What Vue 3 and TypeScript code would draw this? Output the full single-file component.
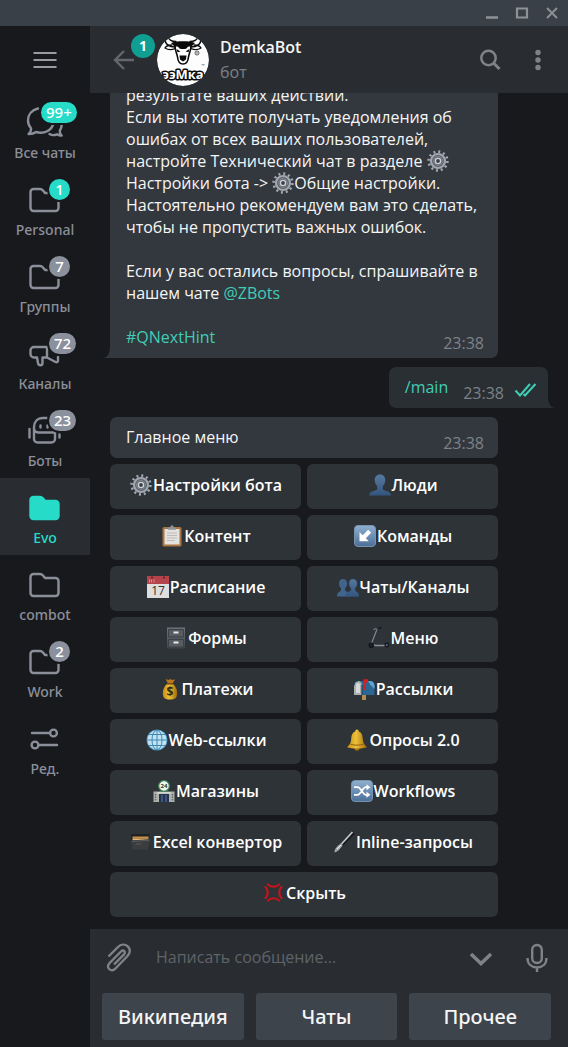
<script setup lang="ts">
import { ref } from 'vue'

interface Folder {
  label: string
  icon: string
  badge?: string
  accent?: boolean
}

interface Mark {
  text: string
  y: number
  size: number
  color: string
  bold?: boolean
}

interface BotButton {
  icon: string
  label: string
  mark?: Mark
}

const folders: Folder[] = [
  { label: 'Все чаты', icon: 'chats', badge: '99+', accent: true },
  { label: 'Personal', icon: 'folder', badge: '1', accent: true },
  { label: 'Группы', icon: 'folder', badge: '7' },
  { label: 'Каналы', icon: 'megaphone', badge: '72' },
  { label: 'Боты', icon: 'bot', badge: '23' },
  { label: 'Evo', icon: 'folder-full' },
  { label: 'combot', icon: 'folder' },
  { label: 'Work', icon: 'folder', badge: '2' },
  { label: 'Ред.', icon: 'sliders' },
]

const active = ref('Evo')
const draft = ref('')

const botButtons: BotButton[] = [
  { icon: 'gear', label: 'Настройки бота' },
  { icon: 'person', label: 'Люди' },
  { icon: 'clipboard', label: 'Контент' },
  { icon: 'arrow', label: 'Команды' },
  { icon: 'calendar', label: 'Расписание', mark: { text: '17', y: 19, size: 12, color: '#2f2f2f' } },
  { icon: 'people', label: 'Чаты/Каналы' },
  { icon: 'cabinet', label: 'Формы' },
  { icon: 'scooter', label: 'Меню' },
  { icon: 'money', label: 'Платежи', mark: { text: '$', y: 18, size: 12, color: '#3b2a08', bold: true } },
  { icon: 'mailbox', label: 'Рассылки' },
  { icon: 'globe', label: 'Web-ссылки' },
  { icon: 'bell', label: 'Опросы 2.0' },
  { icon: 'store', label: 'Магазины', mark: { text: '24', y: 8, size: 6, color: '#243a2c', bold: true } },
  { icon: 'shuffle', label: 'Workflows' },
  { icon: 'box', label: 'Excel конвертор' },
  { icon: 'brush', label: 'Inline-запросы' },
  { icon: 'anger', label: 'Скрыть' },
]

const replies: string[] = ['Википедия', 'Чаты', 'Прочее']
</script>

<template>
  <div class="window">
    <svg class="defs" aria-hidden="true">
      <defs>
        <linearGradient id="g-blue" x1="0" y1="0" x2="0" y2="1">
          <stop offset="0" stop-color="#8fb0d0" /><stop offset="1" stop-color="#4b6f98" />
        </linearGradient>
        <linearGradient id="g-person" x1="0" y1="0" x2="0" y2="1">
          <stop offset="0" stop-color="#56799f" /><stop offset="1" stop-color="#34557e" />
        </linearGradient>
        <linearGradient id="g-gold" x1="0" y1="0" x2="1" y2="0">
          <stop offset="0" stop-color="#c98a10" /><stop offset="0.45" stop-color="#ebc23c" /><stop offset="1" stop-color="#a06807" />
        </linearGradient>
        <linearGradient id="g-steel" x1="0" y1="0" x2="0" y2="1">
          <stop offset="0" stop-color="#6d7377" /><stop offset="1" stop-color="#3f4549" />
        </linearGradient>
      </defs>

      <symbol id="gear" viewBox="0 0 22 22">
        <circle cx="11" cy="11" r="9.4" fill="none" stroke="#a0a7af" stroke-width="2.6" stroke-dasharray="2 2.92" />
        <circle cx="11" cy="11" r="7" fill="#555c65" stroke="#a0a7af" stroke-width="2.2" />
        <circle cx="11" cy="11" r="4.4" fill="none" stroke="#7d858e" stroke-width="1.2" />
        <circle cx="11" cy="11" r="2.6" fill="#3c4249" stroke="#ccd1d6" stroke-width="1.4" />
      </symbol>
      <symbol id="person" viewBox="0 0 22 22">
        <path d="M11 .5c3.400 0 5.300 2.400 5.300 5.600 0 2.600-1 4.800-2.500 6v2.600c0 1.400 2.200 1.900 4.400 2.600 2.200.7 3.600 1.800 3.800 4.200H0c.2-2.400 1.600-3.500 3.800-4.200 2.200-.7 4.400-1.200 4.400-2.600v-2.600c-1.500-1.200-2.500-3.400-2.500-6C5.700 2.900 7.600.5 11 .5z" fill="url(#g-person)" />
      </symbol>
      <symbol id="clipboard" viewBox="0 0 22 22">
        <rect x="1.5" y="2" width="19" height="19.5" rx="1.5" fill="#a87440" />
        <path d="M3.500 4h15v15.500h-15z" fill="#e4e2df" />
        <path d="M7 4.800V2.500h2.300C9.500 1 10 .3 11 .3s1.500.7 1.700 2.200H15v2.300z" fill="#8d9399" />
        <path d="M6 8h10M6 10.500h10M6 13h10M6 15.500h8" stroke="#bcbcbc" stroke-width="1" />
      </symbol>
      <symbol id="arrow" viewBox="0 0 22 22">
        <rect x="0.5" y="0.5" width="21" height="21" rx="3.5" fill="url(#g-blue)" stroke="#7893b0" />
        <path d="M14.200 4.800l3 3-5.400 5.400 3 3H5.500V7l3.200 3.200z" fill="#fff" />
      </symbol>
      <symbol id="calendar" viewBox="0 0 22 22">
        <rect width="22" height="22" fill="#dedede" />
        <rect width="22" height="8" fill="#b5434b" />
        <circle cx="5" cy="1.5" r="1" fill="#5d1d24" /><circle cx="17" cy="1.5" r="1" fill="#5d1d24" />
        <path d="M2.500 3.500v3M4.500 3.500v3M7 3.500v3" stroke="#d98c90" stroke-width="1" />
      </symbol>
      <symbol id="people" viewBox="0 0 22 22">
        <path d="M6 3c2.700 0 4.100 2 4.100 4.600 0 2-.8 3.700-2 4.600v2c0 1.500 4.900.8 4.900 6.300H0c0-5.500 4-4.800 4-6.300v-2c-1.200-.9-2-2.600-2-4.600C2 5 3.300 3 6 3z" fill="#41648d" />
        <path d="M16 3c2.700 0 4.100 2 4.100 4.600 0 2-.8 3.700-2 4.600v2c0 1.500 3.900.8 3.900 6.300H9c0-5.500 5-4.800 5-6.300v-2c-1.200-.9-2-2.600-2-4.600C12 5 13.300 3 16 3z" fill="url(#g-person)" stroke="#2f4f75" stroke-width=".5" />
      </symbol>
      <symbol id="cabinet" viewBox="0 0 22 22">
        <rect x="2" y="0.5" width="18" height="21" fill="url(#g-steel)" />
        <path d="M3.500 2.500h15v7.500h-15zM3.500 12.500h15V20h-15z" fill="#565c61" stroke="#3b4145" />
        <path d="M8.500 4.500h5v2h-5zM8.500 14.500h5v2h-5z" fill="#e6e9ea" />
      </symbol>
      <symbol id="scooter" viewBox="0 0 22 22">
        <path d="M5.500 2.500l3-1M9 2.300L3.500 16.500" fill="none" stroke="#7e8791" stroke-width="1.2" />
        <path d="M10.500 1.500l3-1.200" stroke="#15181d" stroke-width="1.5" />
        <path d="M2.500 16l5 2.500H18" fill="none" stroke="#8a8f97" stroke-width="1.3" />
        <circle cx="3.2" cy="18.2" r="2" fill="#20262e" stroke="#10141b" stroke-width="1.5" />
        <circle cx="18.8" cy="18" r="1.8" fill="#59616c" stroke="#10141b" stroke-width="1.3" />
      </symbol>
      <symbol id="money" viewBox="0 0 22 22">
        <path d="M6.500 1L9.500 2l2-1 1.500 1 3-.5-2.500 4H9z" fill="#b9761c" />
        <path d="M8.500 5.500h5c3 2.500 5 6 4.700 10.500-.3 3.800-2 5.500-7.200 5.500s-6.900-1.700-7.200-5.500C3.500 11.500 5.500 8 8.500 5.500z" fill="url(#g-gold)" />
        <path d="M8 5.800h6" stroke="#7a4a0a" stroke-width="1.5" />
      </symbol>
      <symbol id="mailbox" viewBox="0 0 22 22">
        <path d="M9 17h4v5H9z" fill="#b38b55" />
        <path d="M5 3h12c3 0 4.500 2 4.500 5v9H9z" fill="#2b6793" />
        <path d="M15 3h2c3 0 4.500 2 4.500 5v3l-4-4z" fill="#58a6cf" />
        <path d="M1 7.500C1 4.500 2.700 3 5 3s4 1.500 4 4.500V17H1z" fill="#a8afb2" />
        <path d="M3 8c0-2 .8-3 2-3s2 1 2 3v7H3z" fill="#d8d9d5" />
        <path d="M1 7.500C1 4.500 2.700 3 5 3M9 7v10" fill="none" stroke="#1d3e58" stroke-width="1.2" />
        <path d="M10.500 12V1.200H15V5h-2.200v7z" fill="#d51e25" />
      </symbol>
      <symbol id="globe" viewBox="0 0 22 22">
        <circle cx="11" cy="11" r="10.5" fill="#4f9cc6" />
        <circle cx="11" cy="11" r="9.7" fill="#c0e2f1" />
        <path d="M11 1v20M1 11h20M3 5.500h16M3 16.500h16" fill="none" stroke="#3d88b5" stroke-width="1" />
        <ellipse cx="11" cy="11" rx="5" ry="9.8" fill="none" stroke="#3d88b5" stroke-width="1" />
      </symbol>
      <symbol id="bell" viewBox="0 0 22 22">
        <ellipse cx="11" cy="20" rx="2.5" ry="1.7" fill="#a66c08" />
        <path d="M11 .5c1.200 0 1.800.8 1.800 2 3 1 3.700 4 4 7.500.3 3.800 1.200 5.500 4.200 8.300-4 1.600-16 1.600-20 0 3-2.800 3.900-4.500 4.200-8.300.3-3.500 1-6.500 4-7.500 0-1.200.6-2 1.800-2z" fill="url(#g-gold)" />
        <path d="M4.500 15.200c4 1.300 9 1.300 13 0" fill="none" stroke="#946008" stroke-width="1" />
      </symbol>
      <symbol id="store" viewBox="0 0 22 22">
        <path d="M.5 11.500h21V22H.5z" fill="#aeb2ab" />
        <path d="M6 13.500h10V22H6z" fill="#26344f" />
        <path d="M4.500 13h13" stroke="#e3e5dd" stroke-width="1.5" />
        <path d="M2.500 14v7M19.500 14v7" stroke="#666d6b" stroke-width="1.5" stroke-dasharray="1.5 1" />
        <path d="M9 15v7M13 15v7" stroke="#5576a5" stroke-width="1" />
        <circle cx="11" cy="6" r="5.3" fill="#f3f6ef" stroke="#3e8a58" stroke-width="1.2" />
      </symbol>
      <symbol id="shuffle" viewBox="0 0 22 22">
        <rect x="0.5" y="0.5" width="21" height="21" rx="3.5" fill="url(#g-blue)" stroke="#7893b0" />
        <path d="M3 7.200h3.500c3.500 0 5 7.600 8.500 7.600h2M3 14.800h3.500c3.500 0 5-7.600 8.500-7.600h2" fill="none" stroke="#fff" stroke-width="1.7" />
        <path d="M15.500 4.200l4 3-4 3zM15.500 11.800l4 3-4 3z" fill="#fff" />
      </symbol>
      <symbol id="box" viewBox="0 0 22 22">
        <path d="M1 3h18.500v15H2z" fill="#1f2224" />
        <path d="M2.500 5.500h16v2h-16z" fill="#c98f48" />
        <path d="M2.500 7.500h16v2h-16z" fill="#e8b872" />
        <path d="M1 9.500l19.500-1.500L18.500 18.500H2z" fill="#3b3d3e" />
        <path d="M1.500 10.500l18-1.300" stroke="#5a5c5d" />
        <path d="M6 13h5" stroke="#595c5e" />
      </symbol>
      <symbol id="brush" viewBox="0 0 22 22">
        <path d="M20.500 1.500L8 14.500" stroke="#16191d" stroke-width="3.5" />
        <path d="M19.500 1L7.500 14" stroke="#c4c8cb" stroke-width="1.8" />
        <path d="M8 12.500l1.800 1.700C7 18 5 20.500 1.500 21.500 1.300 18 4 15 8 12.500z" fill="#a5a9ab" />
        <path d="M4 18l4-4" stroke="#f0f0f0" />
      </symbol>
      <symbol id="anger" viewBox="0 0 22 22">
        <path d="M5 2.500c3 3 8 3 11 0M5 18.500c3-3 8-3 11 0M2.500 5c3 3 3 8 0 11M18.500 5c-3 3-3 8 0 11" fill="none" stroke="#c9121a" stroke-width="2.2" stroke-linecap="round" />
      </symbol>

      <symbol id="chats" viewBox="0 0 48 36">
        <path d="M17 3.500C11 5 7 9.500 7 15.500c0 3 1 5.500 3 7.700.4 2-.6 4-2.500 5.800 3 .1 5.500-.5 7.500-2 8 2.400 16-1.500 17.500-9" />
        <path d="M28.500 29c2 1.200 5 1.400 7.500.3 1.500 1 3 1.400 4.700 1.300-1.500-1.500-2.200-3.200-1.900-5 1.400-2 2.200-4.600 1.700-7.600" />
      </symbol>
      <symbol id="folder" viewBox="0 0 48 36">
        <path d="M12.500 7H19c1.500 0 2 .4 3 1.500l2 2.500h10.500a3 3 0 0 1 3 3v12a3 3 0 0 1-3 3h-22a3 3 0 0 1-3-3V10a3 3 0 0 1 3-3z" />
      </symbol>
      <symbol id="folder-full" viewBox="0 0 48 36">
        <path fill="#26dcc8" d="M12.500 7H19c1.500 0 2 .4 3 1.500l2 2.500h10.500a3 3 0 0 1 3 3v12a3 3 0 0 1-3 3h-22a3 3 0 0 1-3-3V10a3 3 0 0 1 3-3z" />
      </symbol>
      <symbol id="megaphone" viewBox="0 0 48 36">
        <path d="M26 21.500V11H13a3.500 3.500 0 0 0-3.500 3.500V18a3.500 3.500 0 0 0 3.500 3.500h3l1 5.500c.3 1.500 1 2.300 2.300 2.300s2.200-.8 2.200-2.300v-5.500H26l8.500 4.500c1.500.7 2.500 0 2.500-1.500V21" />
      </symbol>
      <symbol id="bot" viewBox="0 0 48 36">
        <path d="M26 5h-4c-5.500 0-9 3.800-9 9.300V26a3.500 3.500 0 0 0 3.500 3.500h14A3.500 3.500 0 0 0 34 26v-6.500M13 16.500c.8 2 2.200 3 4.500 3H34M8.500 16v8.500M38.500 21.500v3M19.500 12.500v2M26.500 12.500v2" />
      </symbol>
      <symbol id="sliders" viewBox="0 0 48 36">
        <path d="M11 12h18M18 24h18" /><circle cx="32.5" cy="12" r="3.4" /><circle cx="14" cy="24" r="3.4" />
      </symbol>
    </svg>

    <div class="titlebar">
      <button aria-label="Свернуть"><svg width="14" height="14" viewBox="0 0 14 14"><path d="M1 11.500h12" stroke-width="2.5" /></svg></button>
      <button aria-label="Развернуть"><svg width="14" height="14" viewBox="0 0 14 14"><path d="M2 2.500h10v9H2z" stroke-width="2.2" /></svg></button>
      <button aria-label="Закрыть"><svg width="14" height="14" viewBox="0 0 14 14"><path d="M2 2l10 10M12 2L2 12" stroke-width="1.8" /></svg></button>
    </div>

    <div class="body">
      <nav class="sidebar">
        <button class="burger" aria-label="Меню">
          <svg width="24" height="18" viewBox="0 0 24 18"><path d="M0.500 2h23M0.500 9h23M0.500 16h23" /></svg>
        </button>
        <button
          v-for="f in folders"
          :key="f.label"
          class="folder"
          :class="{ active: f.label === active }"
          @click="active = f.label"
        >
          <svg width="48" height="36"><use :href="'#' + f.icon" /></svg>
          <span class="folder-label">{{ f.label }}</span>
          <span v-if="f.badge" class="badge" :class="{ accent: f.accent, wide: f.badge.length > 2 }">{{ f.badge }}</span>
        </button>
      </nav>

      <main class="chat">
        <header class="header">
          <button class="back" aria-label="Назад">
            <svg width="22" height="22" viewBox="0 0 22 22"><path d="M21 11H2M11 2l-9 9 9 9" /></svg>
            <span class="unread">1</span>
          </button>
          <svg class="avatar" width="52" height="52" viewBox="0 0 52 52">
            <circle cx="26" cy="26" r="26" fill="#fdfdfd" />
            <g fill="none" stroke="#0b0b0b" stroke-linecap="round" stroke-linejoin="round">
              <path d="M8 5c0 5 4 8 10 8M44 5c0 5-4 8-10 8" stroke-width="1.5" />
              <path d="M11 3c1 3 4 4.500 8 4.500M41 3c-1 3-4 4.500-8 4.500" stroke-width="1.3" />
              <path d="M15 11c-3 0-6 1-7 3 3 2 7 2 10 .5M37 11c3 0 6 1 7 3-3 2-7 2-10 .5" stroke-width="1.3" />
              <path d="M18 12c0 5 2 7 2.500 11 .4 4 1.500 7 5.500 7s5.100-3 5.500-7c.5-4 2.500-6 2.500-11" stroke-width="1.6" />
            </g>
            <path d="M14 9c4-2.500 20-2.500 24 0l-4 4c-2-1-3-.5-4.500 1.500-2 .8-5 .8-7 0C21 12.500 20 12 18 13z" fill="#0b0b0b" />
            <path d="M19.500 15l4 2.500-3 .8zM32.500 15l-4 2.500 3 .8z" fill="#0b0b0b" />
            <path d="M22.500 21.500h7l-.5 4-3 2-3-2z" fill="#0b0b0b" />
            <circle cx="40" cy="19" r="2" fill="none" stroke="#333" stroke-width=".8" />
            <circle cx="40" cy="19" r=".7" fill="#333" />
            <text x="46" y="33" font-size="4" text-anchor="middle" fill="#333">™</text>
            <path d="M5 42h42" stroke="#0b0b0b" stroke-width="3" stroke-linecap="round" />
            <text x="26" y="45" font-size="13" font-weight="700" text-anchor="middle" fill="#fff" stroke="#0b0b0b" stroke-width="3" paint-order="stroke" stroke-linejoin="round">ээМка</text>
          </svg>
          <div class="peer">
            <h1>DemkaBot</h1>
            <p>бот</p>
          </div>
          <button class="tool" aria-label="Поиск">
            <svg width="24" height="24" viewBox="0 0 24 24"><circle cx="10.5" cy="10" r="7.2" stroke-width="2.5" /><path d="M15.500 15l6 6" stroke-width="3" /></svg>
          </button>
          <button class="tool" aria-label="Ещё">
            <svg class="dots" width="24" height="24" viewBox="0 0 24 24"><circle cx="12" cy="4.5" r="2.7" /><circle cx="12" cy="12" r="2.7" /><circle cx="12" cy="19.5" r="2.7" /></svg>
          </button>
        </header>

        <section class="feed">
          <article class="bubble in tailed">
            <p>
              результате ваших действий.<br />
              Если вы хотите получать уведомления об<br />
              ошибах от всех ваших пользователей,<br />
              настройте Технический чат в разделе <svg class="emoji"><use href="#gear" /></svg><br />
              Настройки бота -&gt; <svg class="emoji"><use href="#gear" /></svg>Общие настройки.<br />
              Настоятельно рекомендуем вам это сделать,<br />
              чтобы не пропустить важных ошибок.
            </p>
            <p>
              Если у вас остались вопросы, спрашивайте в<br />
              нашем чате <a href="#zbots">@ZBots</a>
            </p>
            <p><a href="#hint">#QNextHint</a></p>
            <time>23:38</time>
            <svg class="tail" width="6" height="12" viewBox="0 0 6 12"><path d="M6 0v12H0c4-1.500 6-5 6-12z" /></svg>
          </article>

          <article class="bubble out">
            <a href="#main">/main</a>
            <time>23:38</time>
            <svg class="checks" width="24" height="16" viewBox="0 0 24 16"><path d="M1.500 8.500l4.500 5L16 2M9.500 12l1.500 1.500L21.500 2" /></svg>
            <svg class="tail" width="6" height="12" viewBox="0 0 6 12"><path d="M0 0v12h6C2 10.500 0 7 0 0z" /></svg>
          </article>

          <article class="bubble in">
            <p>Главное меню</p>
            <time>23:38</time>
          </article>

          <div class="inline-keys">
            <button v-for="b in botButtons" :key="b.label">
              <svg class="emoji" viewBox="0 0 22 22">
                <use :href="'#' + b.icon" />
                <text
                  v-if="b.mark"
                  x="11"
                  :y="b.mark.y"
                  :font-size="b.mark.size"
                  :fill="b.mark.color"
                  :font-weight="b.mark.bold ? 700 : 400"
                  text-anchor="middle"
                >{{ b.mark.text }}</text>
              </svg>
              <span>{{ b.label }}</span>
            </button>
          </div>
        </section>

        <footer class="composer">
          <div class="entry">
            <button aria-label="Прикрепить">
              <svg width="26" height="30" viewBox="0 0 26 30"><path d="M2.500 13.500L12 4c3-3 7-3.200 9.800-.6s2.600 6.600-.3 9.600L9.500 25.500c-2 2-4.500 2.200-6.300.5s-1.500-4 .4-6L15 8.500c1-1 2.300-1.200 3.200-.3s.8 2.200-.2 3.200L8 21.500M7.500 16l6-6" /></svg>
            </button>
            <input v-model="draft" type="text" aria-label="Сообщение" placeholder="Написать сообщение..." />
            <button aria-label="Скрыть клавиатуру">
              <svg width="24" height="24" viewBox="0 0 24 24"><path d="M2 8l10 9.500L22 8" stroke-width="3.5" /></svg>
            </button>
            <button aria-label="Голосовое сообщение">
              <svg width="24" height="30" viewBox="0 0 24 30"><rect x="7.2" y="2" width="9.6" height="18" rx="4.8" /><path d="M2.500 15c0 6 4 9.500 9.500 9.500s9.500-3.500 9.500-9.500M12 24.500V29" /></svg>
            </button>
          </div>
          <div class="replies">
            <button v-for="r in replies" :key="r">{{ r }}</button>
          </div>
        </footer>
      </main>
    </div>
  </div>
</template>

<style>
body {
  margin: 0;
  background: #18191d;
}
</style>

<style scoped>
.window {
  display: flex;
  flex-direction: column;
  height: 100vh;
  background: #18191d;
  color: #f5f5f5;
  font-family: 'Open Sans', 'Noto Sans', sans-serif;
  font-size: 16px;
  line-height: 22px;
}
.defs {
  position: absolute;
  width: 0;
  height: 0;
}
button {
  margin: 0;
  padding: 0;
  border: 0;
  background: none;
  color: inherit;
  font: inherit;
  cursor: pointer;
}
svg {
  display: block;
  fill: none;
}
p,
h1 {
  margin: 0;
}
a {
  color: #40cdb6;
  text-decoration: none;
}
.titlebar {
  display: flex;
  flex: none;
  justify-content: flex-end;
  align-items: center;
  gap: 16px;
  height: 26px;
  padding-right: 9px;
  background: #3a4047;
}
.titlebar svg {
  stroke: #8e9297;
}
.body {
  display: flex;
  flex: 1;
  min-height: 0;
}
.sidebar {
  display: flex;
  flex: none;
  flex-direction: column;
  width: 90px;
  overflow: hidden;
}
.burger {
  display: flex;
  flex: none;
  align-items: center;
  justify-content: center;
  height: 67px;
}
.burger svg {
  stroke: #989ba1;
  stroke-width: 2;
}
.folder {
  position: relative;
  display: flex;
  flex: none;
  flex-direction: column;
  align-items: center;
  height: 77px;
  padding-top: 12px;
  color: #8b8f99;
}
.folder svg {
  stroke: currentColor;
  stroke-width: 2.4;
  stroke-linecap: round;
  stroke-linejoin: round;
}
.folder-label {
  font-family: 'Noto Sans', 'Open Sans', sans-serif;
  font-size: 14px;
  font-weight: 500;
  line-height: 24px;
}
.folder.active {
  background: #292d32;
  color: #26dcc8;
}
.badge {
  position: absolute;
  top: 9px;
  left: 49px;
  box-sizing: border-box;
  min-width: 21px;
  height: 21px;
  padding: 0 5px;
  border-radius: 11px;
  background: #8b909d;
  box-shadow: 0 0 0 2px #18191d;
  color: #fff;
  font-family: 'Noto Sans', 'Open Sans', sans-serif;
  font-size: 15px;
  font-weight: 500;
  line-height: 21px;
}
.badge.accent {
  background: #26dcc8;
}
.badge.wide {
  left: 41px;
}
.chat {
  display: flex;
  flex: 1;
  flex-direction: column;
  min-width: 0;
}
.header {
  display: flex;
  flex: none;
  align-items: center;
  box-sizing: border-box;
  height: 67px;
  padding: 0 18px 0 23px;
  background: #292d32;
}
.back {
  position: relative;
  margin-right: 22px;
}
.back svg {
  stroke: #64686c;
  stroke-width: 2.4;
}
.unread {
  position: absolute;
  top: -15px;
  left: 18px;
  width: 24px;
  height: 24px;
  border-radius: 50%;
  background: #0f9e91;
  color: #fff;
  font-size: 14px;
  font-weight: 700;
  line-height: 24px;
}
.avatar {
  border-radius: 50%;
}
.peer {
  flex: 1;
  margin-left: 11px;
  padding-bottom: 2px;
}
.peer h1 {
  font-size: 16px;
  font-weight: 600;
  line-height: 26px;
}
.peer p {
  color: #7c8084;
  line-height: 24px;
}
.tool {
  margin-left: 24px;
}
.tool svg {
  stroke: #808386;
}
.tool .dots {
  fill: #808386;
  stroke: none;
}
.feed {
  display: flex;
  flex: 1;
  flex-direction: column;
  justify-content: flex-end;
  min-height: 0;
  padding: 0 20px 12px;
  overflow: hidden;
}
.bubble {
  position: relative;
  flex: none;
  box-sizing: border-box;
  padding: 9px 16px 10px;
  border-radius: 7px;
}
.bubble p + p {
  margin-top: 22px;
}
.bubble.in {
  width: calc(100% - 50px);
  background: #33383e;
}
.bubble.tailed {
  border-bottom-left-radius: 0;
}
.bubble time {
  color: #7d8287;
}
.bubble.in time {
  position: absolute;
  right: 14px;
  bottom: 4px;
}
.bubble.out {
  display: flex;
  align-self: flex-end;
  margin: 9px 0;
  padding-right: 10px;
  border-bottom-right-radius: 0;
  background: #2a2f33;
}
.bubble.out time {
  margin: 6px 10px -6px 15px;
}
.checks {
  align-self: flex-end;
  stroke: #40cdb6;
  stroke-width: 2;
}
.tail {
  position: absolute;
  bottom: 0;
}
.in .tail {
  left: -6px;
  fill: #33383e;
}
.out .tail {
  right: -6px;
  fill: #2a2f33;
}
.emoji {
  flex: none;
  width: 22px;
  height: 22px;
}
p .emoji {
  display: inline-block;
  vertical-align: bottom;
}
.inline-keys {
  display: grid;
  flex: none;
  grid-template-columns: 1fr 1fr;
  gap: 6px;
  width: calc(100% - 50px);
  margin-top: 6px;
}
.inline-keys button {
  display: flex;
  align-items: center;
  justify-content: center;
  gap: 1px;
  height: 45px;
  padding: 0 0 3px 1px;
  border-radius: 6px;
  background: #2e3338;
  color: #fff;
  font-weight: 600;
  white-space: nowrap;
}
.inline-keys button:last-child {
  grid-column: 1 / -1;
}
.composer {
  flex: none;
  background: #292d32;
}
.entry {
  display: flex;
  align-items: center;
  height: 58px;
  padding: 0 19px 0 16px;
}
.entry svg {
  stroke: #808386;
  stroke-width: 2.4;
}
.entry input {
  flex: 1;
  min-width: 0;
  margin: 0 0 0 24px;
  padding: 0 0 2px;
  border: 0;
  outline: 0;
  background: none;
  color: #f5f5f5;
  font: inherit;
}
.entry input::placeholder {
  color: #5f6367;
  opacity: 1;
}
.entry button + button {
  margin-left: 32px;
}
.replies {
  display: grid;
  grid-template-columns: repeat(3, 1fr);
  gap: 12px;
  padding: 6px 17px 7px 12px;
}
.replies button {
  height: 47px;
  border-radius: 3px;
  background: #3d444b;
  font-family: 'Noto Sans', 'Open Sans', sans-serif;
  font-size: 20px;
  font-weight: 500;
}
</style>
